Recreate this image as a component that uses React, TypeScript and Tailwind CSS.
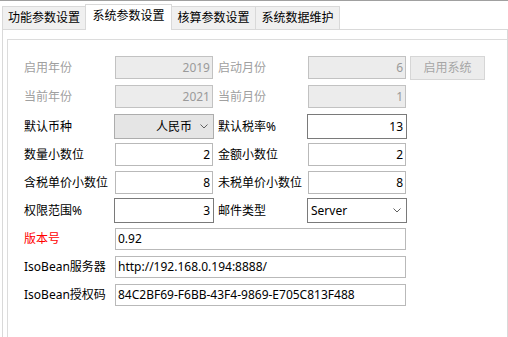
import React from "react";

const font = "font-['Noto_Sans','Noto_Sans_CJK_SC',sans-serif]";

const tabs = [
  { label: "功能参数设置", w: "w-[84px]" },
  { label: "系统参数设置", w: "w-[87px]", active: true },
  { label: "核算参数设置", w: "w-[85px]" },
  { label: "系统数据维护", w: "w-[85px]" },
];

function Chevron() {
  return (
    <svg width="8" height="5" viewBox="0 0 8 5" className="shrink-0">
      <polyline points="0.5,0.5 4,4 7.5,0.5" fill="none" stroke="#606060" strokeWidth="1" />
    </svg>
  );
}

function Label({ text, disabled, red, right }: { text: string; disabled?: boolean; red?: boolean; right?: boolean }) {
  return (
    <div
      className={`${right ? "w-[89px] ml-[4px]" : "w-[90px]"} shrink-0 whitespace-nowrap ${
        red ? "text-[#ff0000]" : disabled ? "text-[#a0a0a0]" : "text-black"
      }`}
    >
      {text}
    </div>
  );
}

function Box({ value, disabled, focused }: { value: string; disabled?: boolean; focused?: boolean }) {
  if (focused) {
    return (
      <div className="w-[100px] h-[25px] border border-[#7a7a7a] bg-white flex items-center justify-end pr-[3px] text-black">
        {value}
      </div>
    );
  }
  return (
    <div className="w-[100px] h-[25px] flex items-center">
      <div
        className={`mx-px w-[98px] h-[23px] border flex items-center justify-end pr-[2px] ${
          disabled ? "bg-[#ececec] border-[#c2c2c2] text-[#9a9a9a]" : "bg-white border-[#b9b9b9] text-black"
        }`}
      >
        {value}
      </div>
    </div>
  );
}

function Wide({ value }: { value: string }) {
  return (
    <div className="w-[293px] h-[25px] flex items-center">
      <div className="mx-px w-[291px] h-[22px] border border-[#b9b9b9] bg-white flex items-center pl-[2px] text-black whitespace-nowrap">
        {value}
      </div>
    </div>
  );
}

function Row({ children, className = "" }: { children: React.ReactNode; className?: string }) {
  return <div className={`flex items-center h-[25px] ${className}`}>{children}</div>;
}

export default function App() {
  return (
    <div className={`${font} text-[12px] leading-none w-[508px] h-[337px] bg-white border-t border-[#a0a0a0] overflow-hidden`}>
      <div className="flex items-end pl-[2px] pt-[3px]">
        {tabs.map((t) => (
          <div
            key={t.label}
            className={`${t.w} -mr-px flex items-center justify-center border border-b-0 border-[#d9d9d9] whitespace-nowrap ${
              t.active ? "h-[26px] bg-white relative z-10 -mb-px pb-[4px]" : "h-[23px] bg-[#f0f0f0] pb-[1px]"
            }`}
          >
            {t.label}
          </div>
        ))}
      </div>
      <div className="ml-[2px] h-[320px] border border-[#d9d9d9] bg-white pt-[9px] pl-[4px]">
        <div className="h-[310px] border-l border-t border-[#dcdcdc] pl-[16px] pt-[15px] flex flex-col">
          <Row>
            <Label text="启用年份" disabled />
            <Box value="2019" disabled />
            <Label text="启动月份" disabled right />
            <Box value="6" disabled />
            <div className="ml-[3px] w-[75px] h-[24px] bg-[#ececec] border border-[#d6d6d6] text-[#a6a6a6] flex items-center justify-center">
              启用系统
            </div>
          </Row>
          <Row className="mt-[4px]">
            <Label text="当前年份" disabled />
            <Box value="2021" disabled />
            <Label text="当前月份" disabled right />
            <Box value="1" disabled />
          </Row>
          <Row className="mt-[5px]">
            <Label text="默认币种" />
            <div className="w-[100px] h-[25px] bg-[#e5e5e5] border border-[#adadad] flex items-center justify-end gap-[8px] pr-[5px] text-black">
              <span>人民币</span>
              <Chevron />
            </div>
            <Label text="默认税率%" right />
            <Box value="13" focused />
          </Row>
          <Row className="mt-[3px]">
            <Label text="数量小数位" />
            <Box value="2" />
            <Label text="金额小数位" right />
            <Box value="2" />
          </Row>
          <Row className="mt-[3px]">
            <Label text="含税单价小数位" />
            <Box value="8" />
            <Label text="未税单价小数位" right />
            <Box value="8" />
          </Row>
          <Row className="mt-[3px]">
            <Label text="权限范围%" />
            <Box value="3" focused />
            <Label text="邮件类型" right />
            <div className="w-[100px] h-[25px] bg-white border border-[#7a7a7a] flex items-center justify-between pl-[3px] pr-[5px] text-black">
              <span>Server</span>
              <Chevron />
            </div>
          </Row>
          <Row className="mt-[3px]">
            <Label text="版本号" red />
            <Wide value="0.92" />
          </Row>
          <Row className="mt-[3px]">
            <Label text="IsoBean服务器" />
            <Wide value="http://192.168.0.194:8888/" />
          </Row>
          <Row className="mt-[3px]">
            <Label text="IsoBean授权码" />
            <Wide value="84C2BF69-F6BB-43F4-9869-E705C813F488" />
          </Row>
        </div>
      </div>
    </div>
  );
}
